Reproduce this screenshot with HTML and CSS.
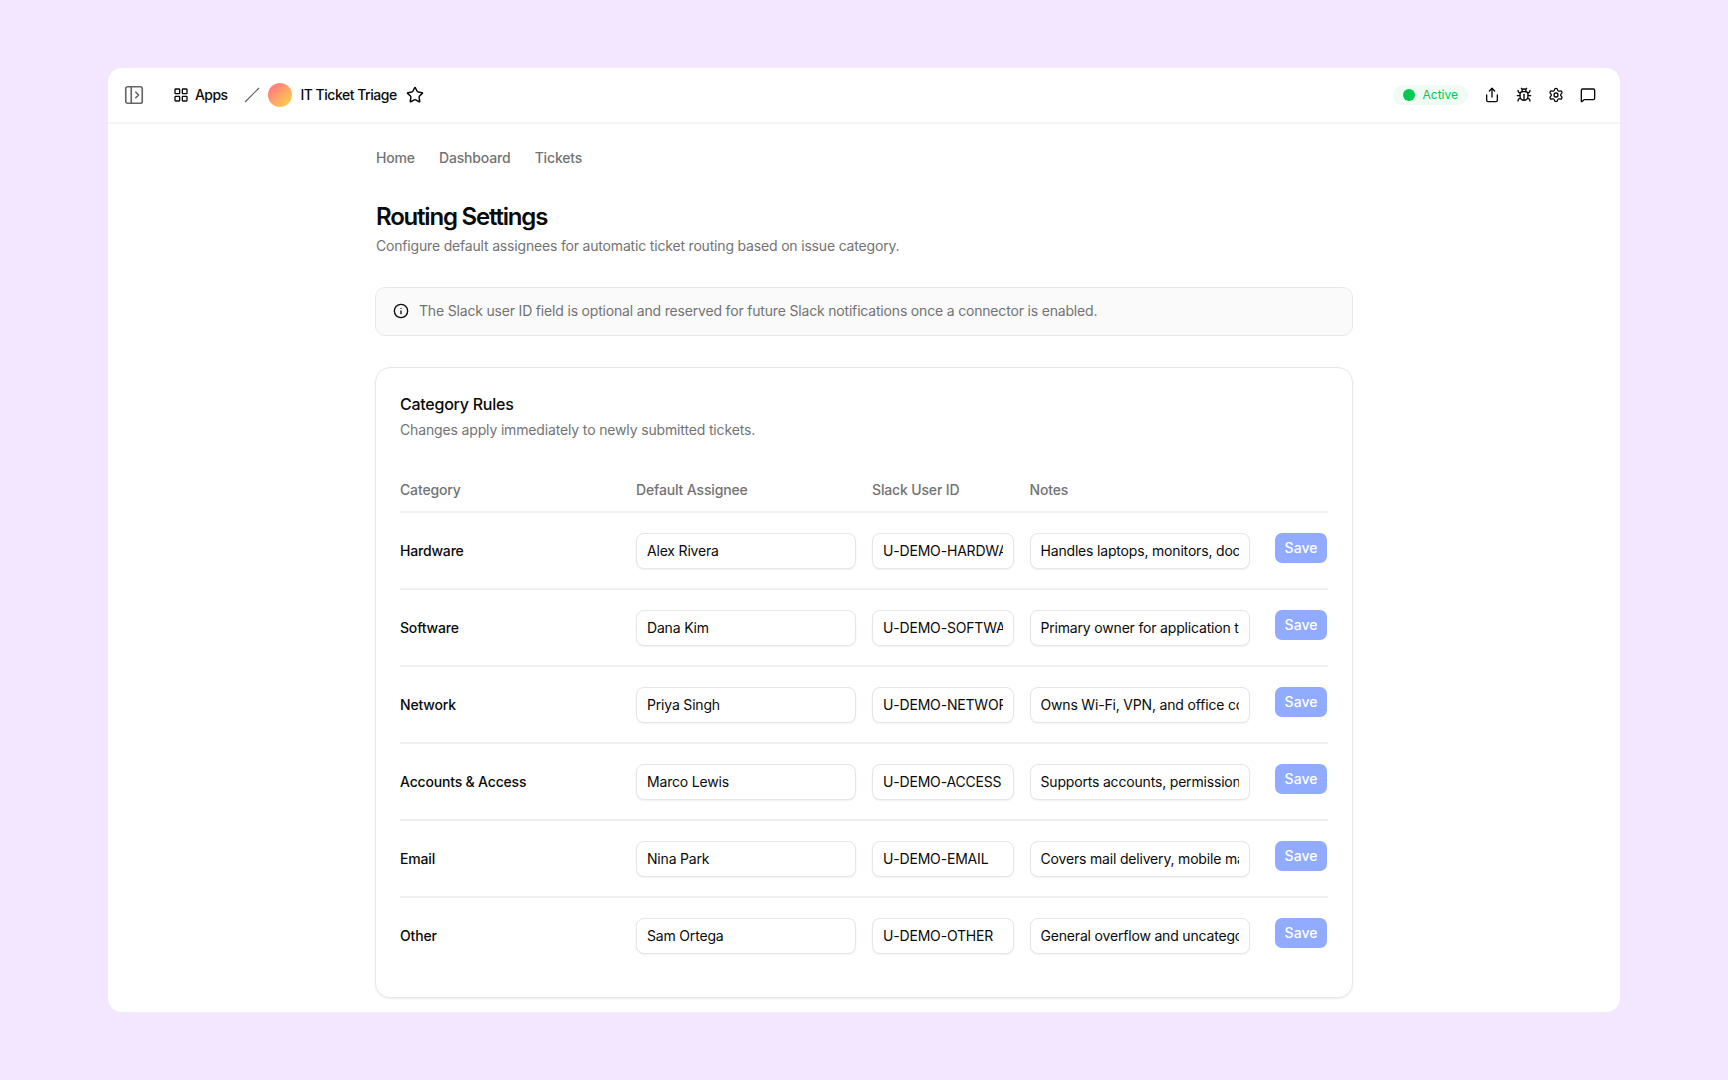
FILE: index.html
```html
<!DOCTYPE html>
<html lang="en">
<head>
    <meta charset="UTF-8">
    <meta name="viewport" content="width=device-width, initial-scale=1.0">
    <title>IT Ticket Triage</title>
    <link rel="stylesheet" href="styles.css">
</head>
<body>
    <div class="window">
        <!-- Top bar -->
        <header class="topbar">
            <svg class="icon icon-panel" viewBox="0 0 24 24"><rect x="3" y="3" width="18" height="18" rx="2"/><path d="M9 3v18"/><path d="m14 9 3 3-3 3"/></svg>
            <a class="apps">
                <svg class="icon" viewBox="0 0 24 24"><rect x="3" y="3" width="7" height="7" rx="1"/><rect x="14" y="3" width="7" height="7" rx="1"/><rect x="14" y="14" width="7" height="7" rx="1"/><rect x="3" y="14" width="7" height="7" rx="1"/></svg>
                <span>Apps</span>
            </a>
            <svg class="slash" viewBox="0 0 16 16"><path d="M1 15 15 1"/></svg>
            <span class="avatar"></span>
            <span class="app-name">IT Ticket Triage</span>
            <svg class="icon icon-star" viewBox="0 0 24 24"><path d="M11.525 2.295a.53.53 0 0 1 .95 0l2.31 4.679a2.123 2.123 0 0 0 1.595 1.16l5.166.756a.53.53 0 0 1 .294.904l-3.736 3.638a2.123 2.123 0 0 0-.611 1.878l.882 5.14a.53.53 0 0 1-.771.56l-4.618-2.428a2.122 2.122 0 0 0-1.973 0L6.396 21.01a.53.53 0 0 1-.77-.56l.881-5.139a2.122 2.122 0 0 0-.611-1.879L2.16 9.795a.53.53 0 0 1 .294-.906l5.165-.755a2.122 2.122 0 0 0 1.597-1.16z"/></svg>
            <div class="actions">
                <span class="status">Active</span>
                <svg class="icon" viewBox="0 0 24 24"><path d="M12 2v13"/><path d="m16 6-4-4-4 4"/><path d="M4 12v8a2 2 0 0 0 2 2h12a2 2 0 0 0 2-2v-8"/></svg>
                <svg class="icon" viewBox="0 0 24 24"><path d="M12 20v-9"/><path d="M14 7a4 4 0 0 1 4 4v3a6 6 0 0 1-12 0v-3a4 4 0 0 1 4-4z"/><path d="M14.12 3.88 16 2"/><path d="M21 21a4 4 0 0 0-3.81-4"/><path d="M21 5a4 4 0 0 1-3.55 3.97"/><path d="M22 13h-4"/><path d="M3 21a4 4 0 0 1 3.81-4"/><path d="M3 5a4 4 0 0 0 3.55 3.97"/><path d="M6 13H2"/><path d="m8 2 1.88 1.88"/><path d="M9 7.13V6a3 3 0 1 1 6 0v1.13"/></svg>
                <svg class="icon" viewBox="0 0 24 24"><path d="M9.671 4.136a2.34 2.34 0 0 1 4.659 0 2.34 2.34 0 0 0 3.319 1.915 2.34 2.34 0 0 1 2.33 4.033 2.34 2.34 0 0 0 0 3.831 2.34 2.34 0 0 1-2.33 4.033 2.34 2.34 0 0 0-3.319 1.915 2.34 2.34 0 0 1-4.659 0 2.34 2.34 0 0 0-3.32-1.915 2.34 2.34 0 0 1-2.33-4.033 2.34 2.34 0 0 0 0-3.831A2.34 2.34 0 0 1 6.35 6.051a2.34 2.34 0 0 0 3.319-1.915"/><circle cx="12" cy="12" r="3"/></svg>
                <svg class="icon" viewBox="0 0 24 24"><path d="M22 17a2 2 0 0 1-2 2H6.828a2 2 0 0 0-1.414.586l-2.202 2.202A.71.71 0 0 1 2 21.286V5a2 2 0 0 1 2-2h16a2 2 0 0 1 2 2z"/></svg>
            </div>
        </header>

        <main class="content">
            <nav class="tabs">
                <a>Home</a>
                <a>Dashboard</a>
                <a>Tickets</a>
            </nav>

            <h1>Routing Settings</h1>
            <p class="subtitle">Configure default assignees for automatic ticket routing based on issue category.</p>

            <div class="alert">
                <svg class="icon" viewBox="0 0 24 24"><circle cx="12" cy="12" r="10"/><path d="M12 16v-4"/><path d="M12 8h.01"/></svg>
                <span>The Slack user ID field is optional and reserved for future Slack notifications once a connector is enabled.</span>
            </div>

            <!-- Rules card -->
            <section class="card">
                <h2>Category Rules</h2>
                <p class="card-text">Changes apply immediately to newly submitted tickets.</p>

                <div class="row head">
                    <span>Category</span>
                    <span>Default Assignee</span>
                    <span>Slack User ID</span>
                    <span>Notes</span>
                </div>
                <div class="row">
                    <span class="name">Hardware</span>
                    <input value="Alex Rivera">
                    <input value="U-DEMO-HARDWARE">
                    <input value="Handles laptops, monitors, docks, and peripherals">
                    <button>Save</button>
                </div>
                <div class="row">
                    <span class="name">Software</span>
                    <input value="Dana Kim">
                    <input value="U-DEMO-SOFTWARE">
                    <input value="Primary owner for application tickets">
                    <button>Save</button>
                </div>
                <div class="row">
                    <span class="name">Network</span>
                    <input value="Priya Singh">
                    <input value="U-DEMO-NETWORK">
                    <input value="Owns Wi-Fi, VPN, and office connectivity">
                    <button>Save</button>
                </div>
                <div class="row">
                    <span class="name">Accounts &amp; Access</span>
                    <input value="Marco Lewis">
                    <input value="U-DEMO-ACCESS">
                    <input value="Supports accounts, permissions, and access">
                    <button>Save</button>
                </div>
                <div class="row">
                    <span class="name">Email</span>
                    <input value="Nina Park">
                    <input value="U-DEMO-EMAIL">
                    <input value="Covers mail delivery, mobile mail, and calendars">
                    <button>Save</button>
                </div>
                <div class="row">
                    <span class="name">Other</span>
                    <input value="Sam Ortega">
                    <input value="U-DEMO-OTHER">
                    <input value="General overflow and uncategorized tickets">
                    <button>Save</button>
                </div>
            </section>
        </main>
    </div>
</body>
</html>
```
FILE: styles.css
```css
* {
    box-sizing: border-box;
}
body {
    margin: 0;
    height: 100vh;
    padding: 68px 108px;
    background: #f3e6ff;
    color: #0a0a0a;
    font-family: Inter, "Liberation Sans", sans-serif;
    font-size: 14px;
    line-height: 20px;
    letter-spacing: -0.18px;
    overflow: hidden;
}
.window {
    height: 944px;
    background: #fff;
    border-radius: 14px;
    overflow: hidden;
}
.icon {
    width: 16px;
    height: 16px;
    flex: none;
    fill: none;
    stroke: currentColor;
    stroke-width: 2;
    stroke-linecap: round;
    stroke-linejoin: round;
}

/* Top bar */
.topbar {
    display: flex;
    align-items: center;
    height: 56px;
    padding: 0 24px 0 15px;
    border-bottom: 2px solid #f5f5f5;
    font-weight: 500;
}
.icon-panel {
    width: 22px;
    height: 22px;
    color: #666;
    stroke-width: 1.8;
}
.apps {
    display: flex;
    align-items: center;
    gap: 6px;
    margin-left: 28px;
    letter-spacing: -0.6px;
}
.slash {
    width: 16px;
    height: 16px;
    margin-left: 17px;
    fill: none;
    stroke: #666;
    stroke-width: 1.2;
}
.avatar {
    width: 24px;
    height: 24px;
    margin-left: 8px;
    border-radius: 50%;
    background: linear-gradient(135deg, #ff6b8b, #ffdb45);
}
.app-name {
    margin-left: 8px;
    letter-spacing: -0.48px;
}
.icon-star {
    width: 18px;
    height: 18px;
    margin-left: 9px;
}
.actions {
    display: flex;
    align-items: center;
    gap: 16px;
    margin-left: auto;
}
.status {
    display: flex;
    align-items: center;
    gap: 8px;
    height: 20px;
    padding: 0 10px;
    border-radius: 10px;
    background: #effbf3;
    color: #00c951;
    font-size: 12px;
    font-weight: 400;
    letter-spacing: 0;
}
.status::before {
    content: "";
    width: 12px;
    height: 12px;
    border-radius: 50%;
    background: #00c951;
}

/* Page */
.content {
    width: 978px;
    margin: 0 auto;
    padding-top: 24px;
}
.tabs {
    display: flex;
    gap: 24px;
    padding-left: 1px;
    color: #737373;
    font-weight: 500;
    letter-spacing: -0.15px;
}
h1 {
    margin: 34px 0 0;
    padding-left: 1px;
    font-size: 24px;
    line-height: 30px;
    font-weight: 600;
    letter-spacing: -1.2px;
}
.subtitle {
    margin: 4px 0 0;
    padding-left: 1px;
    color: #737373;
}
.alert {
    display: flex;
    align-items: center;
    gap: 10px;
    height: 49px;
    margin-top: 31px;
    padding: 0 17px 2px;
    border: 1px solid #e8e8e8;
    border-radius: 10px;
    background: #fafafa;
    color: #737373;
}
.alert .icon {
    color: #0a0a0a;
}

/* Rules card */
.card {
    height: 631px;
    margin-top: 31px;
    padding: 25px 24px;
    border: 1px solid #e8e8e8;
    border-radius: 15px;
    box-shadow: 0 1px 2px rgba(0, 0, 0, 0.08);
}
h2 {
    margin: 0;
    font-size: 16px;
    line-height: 22px;
    font-weight: 500;
    letter-spacing: -0.25px;
}
.card-text {
    margin: 5px 0 0;
    color: #737373;
    letter-spacing: -0.15px;
}
.row {
    display: grid;
    grid-template-columns: 220px 220px 141.5px 220px 1fr;
    gap: 16px;
    height: 77px;
    padding-top: 20px;
    border-bottom: 2px solid #f0f0f0;
}
.row:last-child {
    border-bottom: none;
}
.head {
    height: 73px;
    padding-top: 40px;
    color: #737373;
    font-weight: 500;
    letter-spacing: -0.15px;
}
.name {
    padding-top: 8px;
    font-weight: 500;
}
.row input {
    width: 100%;
    height: 36px;
    padding: 0 10px 1px;
    border: 1px solid #e6e6e6;
    border-radius: 8px;
    box-shadow: 0 1px 2px rgba(0, 0, 0, 0.06);
    color: #0a0a0a;
    font: inherit;
    letter-spacing: inherit;
}
.row button {
    justify-self: end;
    width: 52px;
    height: 30px;
    margin-right: 1px;
    padding: 0;
    border: none;
    border-radius: 7px;
    background: #90abff;
    color: #fff;
    font: inherit;
    font-weight: 500;
}
```
